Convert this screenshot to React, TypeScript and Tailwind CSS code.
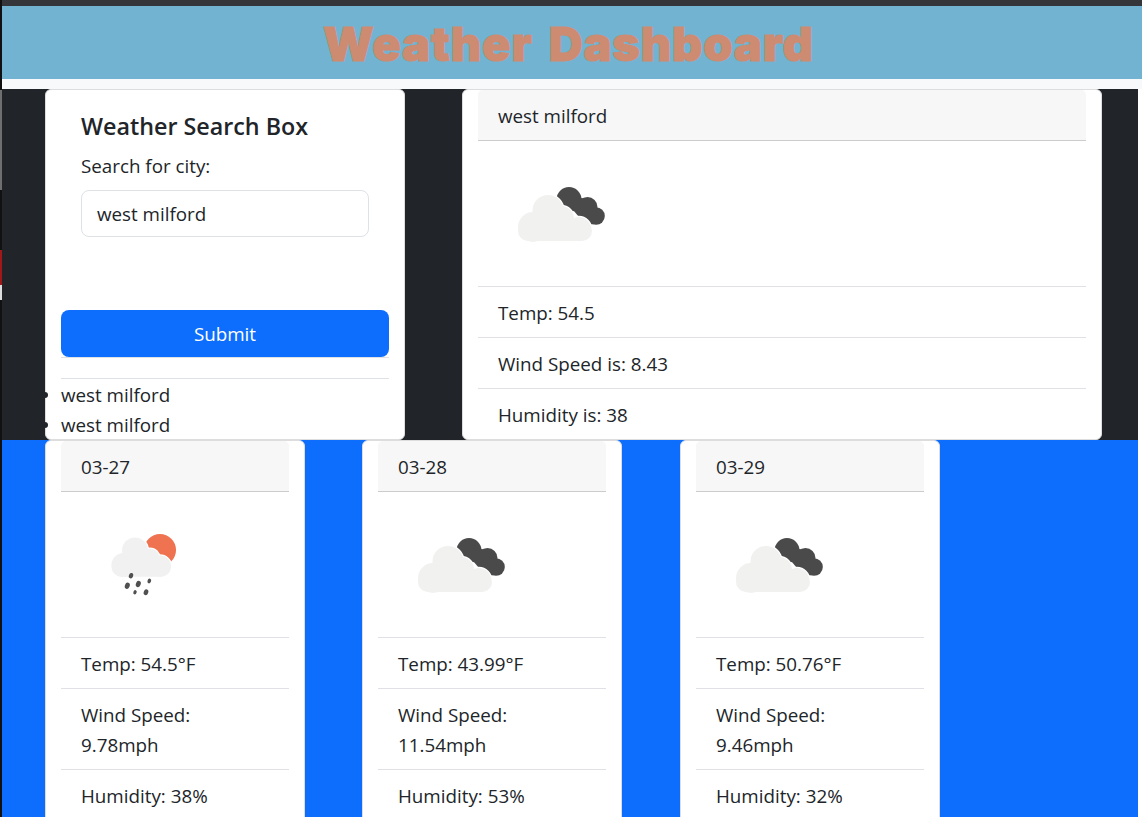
const font = { fontFamily: '"Open Sans", "Noto Sans", sans-serif' };

function DarkCloud() {
  const light = (
    <>
      <circle cx="35" cy="66" r="15" />
      <circle cx="50" cy="49.5" r="15.5" />
      <circle cx="81" cy="68" r="12" />
      <circle cx="63" cy="58" r="13" />
      <rect x="20" y="60" width="74" height="20" rx="10" />
    </>
  );
  return (
    <svg viewBox="0 0 125 105" className="w-[125px] h-[105px] block">
      <g fill="#4a4a4a">
        <circle cx="71" cy="38.5" r="12.5" />
        <circle cx="89.5" cy="46" r="10" />
        <circle cx="98" cy="55" r="8.8" />
        <path d="M62 34 L90 38 L104 62 L88 64 Z" />
      </g>
      <g fill="#ffffff" stroke="#ffffff" strokeWidth="2.5">{light}</g>
      <g fill="#f1f1f0">{light}</g>
    </svg>
  );
}

function RainCloud() {
  const light = (
    <>
      <circle cx="42.5" cy="53" r="12" />
      <circle cx="54" cy="38.5" r="13" />
      <circle cx="79" cy="54" r="10.7" />
      <circle cx="69" cy="46" r="9.5" />
      <rect x="30.5" y="44" width="59.5" height="20.7" rx="10" />
    </>
  );
  const drops: [number, number, number][] = [
    [50, 63.7, 2.8],
    [46.3, 73.7, 3.2],
    [57.3, 72, 3.2],
    [68.3, 69, 2.4],
    [54, 80.3, 2.2],
    [65, 80.3, 3],
  ];
  return (
    <svg viewBox="0 0 125 105" className="w-[125px] h-[105px] block">
      <circle cx="79" cy="38" r="16" fill="#ef7350" />
      <g fill="#ffffff" stroke="#ffffff" strokeWidth="2.2">{light}</g>
      <g fill="#f1f1f1">{light}</g>
      {drops.map(([x, y, r], i) => (
        <ellipse key={i} cx={x} cy={y} rx={r * 0.75} ry={r} transform={`rotate(20 ${x} ${y})`} fill="#505050" />
      ))}
    </svg>
  );
}

function Row({ children }: { children: React.ReactNode }) {
  return <div className="border-t border-[#e0e0e6] px-5 pt-[11px] pb-[9px]">{children}</div>;
}

function CardHeader({ children }: { children: React.ReactNode }) {
  return <div className="h-[51px] bg-[#f7f7f7] rounded-t-[5px] border-b border-[#cccccc] px-5 pt-[11px] leading-[30px]">{children}</div>;
}

function Forecast({ date, icon, temp, wind, hum, className }: { date: string; icon: React.ReactNode; temp: string; wind: string; hum: string; className: string }) {
  return (
    <div className={`w-[260px] h-[390px] bg-white rounded-[6px] border border-[#dddddd] px-[15px] shrink-0 ${className}`}>
      <CardHeader>{date}</CardHeader>
      <div className="p-5 h-[145px]">{icon}</div>
      <Row>Temp: {temp}</Row>
      <Row>
        <div className="w-[150px]">Wind Speed: {wind}</div>
      </Row>
      <Row>Humidity: {hum}</Row>
    </div>
  );
}

function City() {
  return (
    <li className="relative flex items-center">
      <span className="absolute -left-[19px] w-[6px] h-[6px] rounded-full bg-[#212529]" />
      west milford
    </li>
  );
}

export default function App() {
  return (
    <div style={font} className="relative h-[817px] overflow-hidden bg-white text-[18.8px] leading-[30px] text-[#212529]">
      <div className="h-[6px] bg-[#35363a]" />
      <div className="absolute left-0 top-0 bottom-0 w-[2px] bg-[#111111]">
        <div className="mt-[90px] h-[100px] bg-[#6f6f6f]" />
        <div className="mt-[60px] h-[35px] bg-[#a01818]" />
        <div className="h-[15px] bg-[#dddddd]" />
      </div>
      <div className="pl-[2px]">
        <div className="h-[73px] bg-[#71b3d0] pl-[321px]">
          <h1 className="text-[47px] leading-[76px] font-black text-[#cd8b72] whitespace-nowrap tracking-[0.8px] [word-spacing:6px] [-webkit-text-stroke:1px_#cd8b72]" style={{ fontFamily: 'Inter, sans-serif' }}>Weather Dashboard</h1>
        </div>
        <div className="h-[10px] bg-[#f8f9fa]" />
        <div className="mr-[4px] h-[351px] bg-[#212529] pl-[43px] flex items-start gap-[57px]">
          <div className="w-[360px] h-[351px] bg-white rounded-[6px] border border-[#dddddd] px-[15px] shrink-0">
            <div className="px-5 pt-[18px]">
              <h2 className="text-[23.3px] leading-[36px] font-semibold">Weather Search Box</h2>
              <div className="mt-[7px]">Search for city:</div>
              <div className="mt-[9px] h-[47px] rounded-[8px] border border-[#dee2e6] px-[15px] flex items-center">west milford</div>
            </div>
            <button className="mt-[73px] block w-full h-[47px] rounded-[8px] bg-[#0d6efd] text-white">Submit</button>
            <div className="h-[20px] border-t border-b border-[#dee2e6] box-content" />
            <ul className="mt-[1px]">
              <City />
              <City />
            </ul>
          </div>
          <div className="w-[640px] h-[351px] bg-white rounded-[6px] border border-[#dddddd] px-[15px] shrink-0">
            <CardHeader>west milford</CardHeader>
            <div className="p-5 h-[145px]"><DarkCloud /></div>
            <Row>Temp: 54.5</Row>
            <Row>Wind Speed is: 8.43</Row>
            <Row>Humidity is: 38</Row>
          </div>
        </div>
        <div className="mr-[4px] h-[400px] bg-[#0d6efd] pl-[43px] flex items-start">
          <Forecast className="" date="03-27" icon={<RainCloud />} temp="54.5°F" wind="9.78mph" hum="38%" />
          <Forecast className="ml-[57px]" date="03-28" icon={<DarkCloud />} temp="43.99°F" wind="11.54mph" hum="53%" />
          <Forecast className="ml-[58px]" date="03-29" icon={<DarkCloud />} temp="50.76°F" wind="9.46mph" hum="32%" />
        </div>
      </div>
    </div>
  );
}
